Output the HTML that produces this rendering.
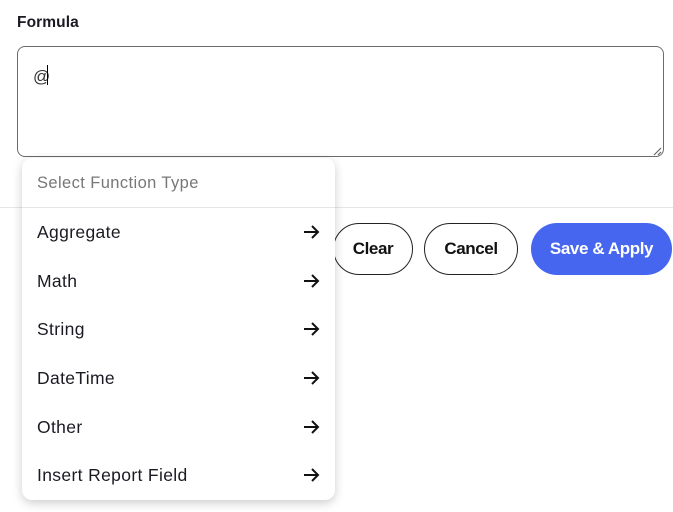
<!DOCTYPE html>
<html><head><style>
*{box-sizing:border-box;margin:0;padding:0}
body{width:673px;height:512px;background:#fff;font-family:"Liberation Sans",sans-serif;position:relative;overflow:hidden;color:#1a1a22}
.lbl{position:absolute;left:17px;top:14px;font-size:15.5px;font-weight:bold;letter-spacing:0.1px}
.ta{position:absolute;left:17px;top:46px;width:647px;height:111px;border:1px solid #6b6b6b;border-radius:8px}
.ta span{position:absolute;left:15px;top:20px;font-size:17px;color:#333}
.caret{position:absolute;left:47px;top:65px;width:1px;height:20px;background:#000}
.hr{position:absolute;left:0;top:207px;width:673px;height:1px;background:#e6e6e6}
.btn{position:absolute;top:223px;height:52px;border-radius:26px;font-size:17px;font-weight:bold;display:flex;align-items:center;justify-content:center;letter-spacing:-0.4px}
.o{border:1.3px solid #222;color:#111}
.dd{position:absolute;left:22px;top:158px;width:313px;height:342px;background:#fff;border-radius:10px;box-shadow:0 3px 10px rgba(0,0,0,.2)}
.hd{height:50px;border-bottom:1px solid #e6e6e6;padding:16px 0 0 15px;font-size:16.5px;color:#777;letter-spacing:0.4px}
.it{position:absolute;left:15px;font-size:17.5px;letter-spacing:0.35px;color:#1a1a22}
.ar{position:absolute;left:281px;width:17px;height:14px}
</style></head><body>
<div class="lbl">Formula</div>
<div class="ta"><span>@</span></div>
<div class="caret"></div>
<svg style="position:absolute;left:652px;top:146px" width="10" height="10"><path d="M2 9L9 2M6 9L9 6" stroke="#666" stroke-width="1.2"/></svg>
<div class="hr"></div>
<div class="btn o" style="left:333px;width:80px">Clear</div>
<div class="btn o" style="left:424px;width:94px">Cancel</div>
<div class="btn" style="left:531px;width:141px;background:#4766f0;color:#fff">Save &amp; Apply</div>
<div class="dd">
<div class="hd">Select Function Type</div>
<div class="it" style="top:64px">Aggregate</div>
<div class="it" style="top:113px">Math</div>
<div class="it" style="top:161px">String</div>
<div class="it" style="top:210px">DateTime</div>
<div class="it" style="top:259px">Other</div>
<div class="it" style="top:307px">Insert Report Field</div>
<svg class="ar" style="top:67px" viewBox="0 0 17 14"><path d="M1 7H15M9 1L15 7L9 13" fill="none" stroke="#111" stroke-width="2"/></svg>
<svg class="ar" style="top:116px" viewBox="0 0 17 14"><path d="M1 7H15M9 1L15 7L9 13" fill="none" stroke="#111" stroke-width="2"/></svg>
<svg class="ar" style="top:164px" viewBox="0 0 17 14"><path d="M1 7H15M9 1L15 7L9 13" fill="none" stroke="#111" stroke-width="2"/></svg>
<svg class="ar" style="top:213px" viewBox="0 0 17 14"><path d="M1 7H15M9 1L15 7L9 13" fill="none" stroke="#111" stroke-width="2"/></svg>
<svg class="ar" style="top:262px" viewBox="0 0 17 14"><path d="M1 7H15M9 1L15 7L9 13" fill="none" stroke="#111" stroke-width="2"/></svg>
<svg class="ar" style="top:310px" viewBox="0 0 17 14"><path d="M1 7H15M9 1L15 7L9 13" fill="none" stroke="#111" stroke-width="2"/></svg>
</div>
</body></html>
